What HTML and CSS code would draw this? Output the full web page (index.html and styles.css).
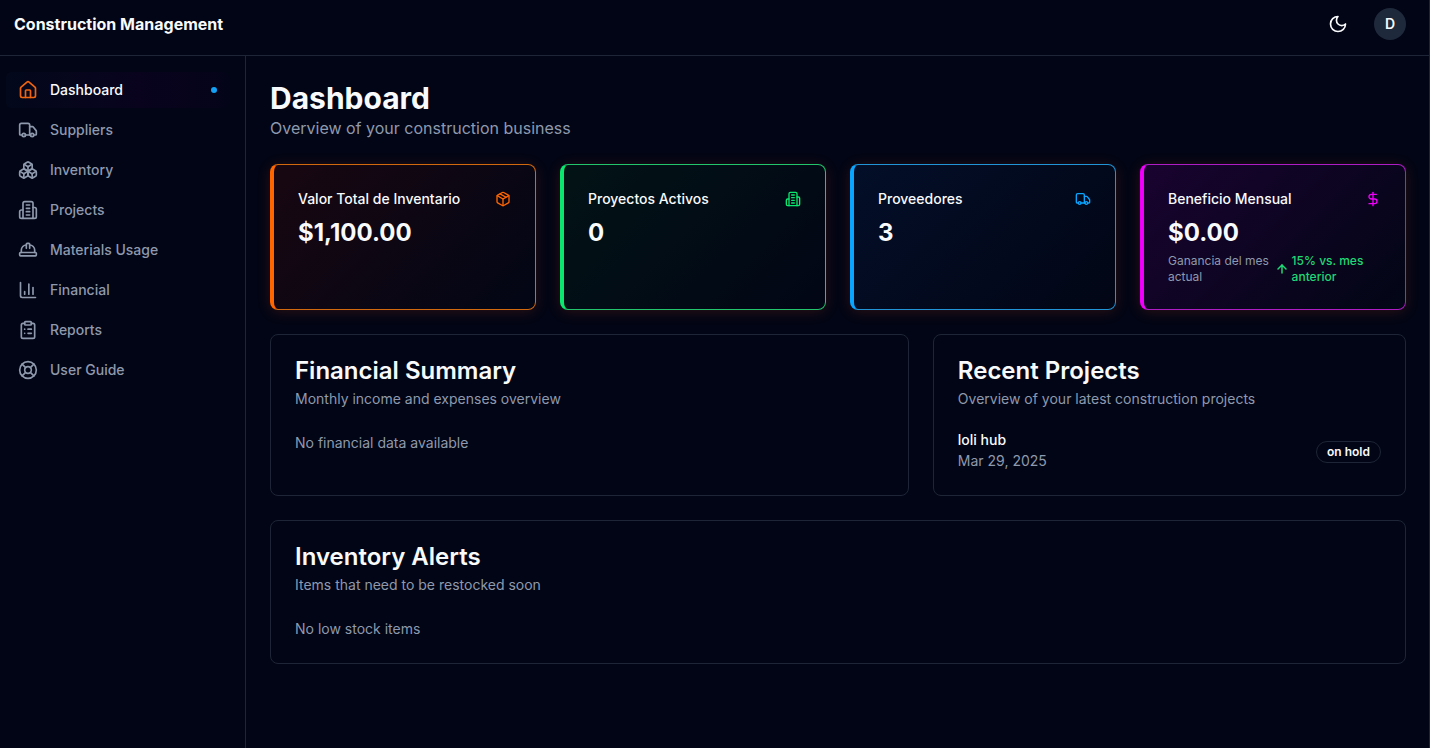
FILE: index.html
```html
<!DOCTYPE html>
<html lang="en">
<head>
<meta charset="utf-8">
<meta name="viewport" content="width=device-width, initial-scale=1">
<title>Construction Management</title>
<link rel="stylesheet" href="styles.css">
</head>
<body>
<svg class="sprite" aria-hidden="true">
  <symbol id="truck" viewBox="0 0 24 24"><path d="M14 18V6a2 2 0 0 0-2-2H4a2 2 0 0 0-2 2v11a1 1 0 0 0 1 1h2"/><path d="M15 18H9"/><path d="M19 18h2a1 1 0 0 0 1-1v-3.65a1 1 0 0 0-.22-.624l-3.48-4.35A1 1 0 0 0 17.52 8H14"/><circle cx="17" cy="18" r="2"/><circle cx="7" cy="18" r="2"/></symbol>
  <symbol id="building" viewBox="0 0 24 24"><path d="M6 22V4a2 2 0 0 1 2-2h8a2 2 0 0 1 2 2v18Z"/><path d="M6 12H4a2 2 0 0 0-2 2v6a2 2 0 0 0 2 2h2"/><path d="M18 9h2a2 2 0 0 1 2 2v9a2 2 0 0 1-2 2h-2"/><path d="M10 6h4"/><path d="M10 10h4"/><path d="M10 14h4"/><path d="M10 18h4"/></symbol>
</svg>
<div class="app">
  <header class="topbar">
    <a class="brand" href="#">Construction Management</a>
    <div class="actions">
      <button class="theme" type="button" aria-label="Toggle theme"><svg class="icon" viewBox="0 0 24 24"><path d="M12 3a6 6 0 0 0 9 9 9 9 0 1 1-9-9Z"/></svg></button>
      <button class="avatar" type="button">D</button>
    </div>
  </header>
  <div class="body">
    <nav class="sidebar">
      <a class="item active" href="#"><svg class="icon" viewBox="0 0 24 24"><path d="M15 21v-8a1 1 0 0 0-1-1h-4a1 1 0 0 0-1 1v8"/><path d="M3 10a2 2 0 0 1 .709-1.528l7-5.999a2 2 0 0 1 2.582 0l7 5.999A2 2 0 0 1 21 10v9a2 2 0 0 1-2 2H5a2 2 0 0 1-2-2z"/></svg><span>Dashboard</span><i class="dot"></i></a>
      <a class="item" href="#"><svg class="icon"><use href="#truck"/></svg><span>Suppliers</span></a>
      <a class="item" href="#"><svg class="icon" viewBox="0 0 24 24"><path d="M2.97 12.92A2 2 0 0 0 2 14.63v3.24a2 2 0 0 0 .97 1.71l3 1.8a2 2 0 0 0 2.06 0L12 19v-5.5l-5-3-4.03 2.42Z"/><path d="m7 16.5-4.74-2.85"/><path d="m7 16.5 5-3"/><path d="M7 16.5v5.17"/><path d="M12 13.5V19l3.97 2.38a2 2 0 0 0 2.06 0l3-1.8a2 2 0 0 0 .97-1.71v-3.24a2 2 0 0 0-.97-1.71L17 10.5l-5 3Z"/><path d="m17 16.5-5-3"/><path d="m17 16.5 4.74-2.85"/><path d="M17 16.5v5.17"/><path d="M7.97 4.42A2 2 0 0 0 7 6.13v4.37l5 3 5-3V6.13a2 2 0 0 0-.97-1.71l-3-1.8a2 2 0 0 0-2.06 0l-3 1.8Z"/><path d="M12 8 7.26 5.15"/><path d="m12 8 4.74-2.85"/><path d="M12 13.5V8"/></svg><span>Inventory</span></a>
      <a class="item" href="#"><svg class="icon"><use href="#building"/></svg><span>Projects</span></a>
      <a class="item" href="#"><svg class="icon" viewBox="0 0 24 24"><path d="M2 18a1 1 0 0 0 1 1h18a1 1 0 0 0 1-1v-2a1 1 0 0 0-1-1H3a1 1 0 0 0-1 1v2z"/><path d="M10 10V5a1 1 0 0 1 1-1h2a1 1 0 0 1 1 1v5"/><path d="M4 15v-3a6 6 0 0 1 6-6"/><path d="M14 6a6 6 0 0 1 6 6v3"/></svg><span>Materials Usage</span></a>
      <a class="item" href="#"><svg class="icon" viewBox="0 0 24 24"><path d="M3 3v16a2 2 0 0 0 2 2h16"/><path d="M18 17V9"/><path d="M13 17V5"/><path d="M8 17v-3"/></svg><span>Financial</span></a>
      <a class="item" href="#"><svg class="icon" viewBox="0 0 24 24"><rect width="8" height="4" x="8" y="2" rx="1"/><path d="M16 4h2a2 2 0 0 1 2 2v14a2 2 0 0 1-2 2H6a2 2 0 0 1-2-2V6a2 2 0 0 1 2-2h2"/><path d="M12 11h4"/><path d="M12 16h4"/><path d="M8 11h.01"/><path d="M8 16h.01"/></svg><span>Reports</span></a>
      <a class="item" href="#"><svg class="icon" viewBox="0 0 24 24"><circle cx="12" cy="12" r="10"/><path d="m4.93 4.93 4.24 4.24"/><path d="m14.83 9.17 4.24-4.24"/><path d="m14.83 14.83 4.24 4.24"/><path d="m9.17 14.83-4.24 4.24"/><circle cx="12" cy="12" r="4"/></svg><span>User Guide</span></a>
    </nav>
    <main class="content">
      <div>
        <h1>Dashboard</h1>
        <p class="lead">Overview of your construction business</p>
      </div>
      <section class="stats">
        <article class="stat orange">
          <div class="stat-head"><h2>Valor Total de Inventario</h2><svg class="icon small" viewBox="0 0 24 24"><path d="m7.5 4.27 9 5.15"/><path d="M21 8a2 2 0 0 0-1-1.73l-7-4a2 2 0 0 0-2 0l-7 4A2 2 0 0 0 3 8v8a2 2 0 0 0 1 1.73l7 4a2 2 0 0 0 2 0l7-4A2 2 0 0 0 21 16Z"/><path d="m3.3 7 8.7 5 8.7-5"/><path d="M12 22V12"/></svg></div>
          <div class="value">$1,100.00</div>
        </article>
        <article class="stat green">
          <div class="stat-head"><h2>Proyectos Activos</h2><svg class="icon small"><use href="#building"/></svg></div>
          <div class="value">0</div>
        </article>
        <article class="stat blue">
          <div class="stat-head"><h2>Proveedores</h2><svg class="icon small"><use href="#truck"/></svg></div>
          <div class="value">3</div>
        </article>
        <article class="stat pink">
          <div class="stat-head"><h2>Beneficio Mensual</h2><svg class="icon small" viewBox="0 0 24 24"><path d="M12 2v20"/><path d="M17 5H9.5a3.5 3.5 0 0 0 0 7h5a3.5 3.5 0 0 1 0 7H6"/></svg></div>
          <div class="value">$0.00</div>
          <div class="note">
            <p>Ganancia del mes actual</p>
            <div class="trend"><svg class="icon tiny" viewBox="0 0 24 24"><path d="m4 12 8-8 8 8"/><path d="M12 20V4"/></svg><span>15% vs. mes anterior</span></div>
          </div>
        </article>
      </section>
      <section class="panels">
        <article class="panel wide">
          <h2>Financial Summary</h2>
          <p class="desc">Monthly income and expenses overview</p>
          <p class="empty">No financial data available</p>
        </article>
        <article class="panel narrow">
          <h2>Recent Projects</h2>
          <p class="desc">Overview of your latest construction projects</p>
          <div class="project">
            <div><p class="name">loli hub</p><p class="date">Mar 29, 2025</p></div>
            <span class="badge">on hold</span>
          </div>
        </article>
      </section>
      <article class="panel">
        <h2>Inventory Alerts</h2>
        <p class="desc">Items that need to be restocked soon</p>
        <p class="empty">No low stock items</p>
      </article>
    </main>
  </div>
</div>
</body>
</html>
```
FILE: styles.css
```css
:root {
  --bg: #020515;
  --line: #1e2536;
  --text: #f8fafc;
  --muted: #8e99ad;
}
* { box-sizing: border-box; }
body, h1, h2, p { margin: 0; }
body {
  background: var(--bg);
  color: var(--text);
  font-family: Inter, "Liberation Sans", sans-serif;
  font-size: 14px;
  line-height: 20px;
}
a { color: inherit; text-decoration: none; }
button { border: 0; padding: 0; font: inherit; color: inherit; background: none; cursor: pointer; }
.sprite { display: none; }
.icon {
  width: 20px;
  height: 20px;
  flex: none;
  fill: none;
  stroke: currentColor;
  stroke-width: 2;
  stroke-linecap: round;
  stroke-linejoin: round;
}
.small { width: 16px; height: 16px; color: var(--accent); }
.tiny { width: 12px; height: 12px; stroke-width: 3; }

.app {
  display: flex;
  flex-direction: column;
  min-height: 100vh;
  box-shadow: inset -1px 0 var(--line);
}
.topbar {
  display: flex;
  align-items: center;
  justify-content: space-between;
  padding: 4px 24px 11px 14px;
  border-bottom: 1px solid var(--line);
}
.brand { font-size: 16px; line-height: 24px; font-weight: 700; }
.actions { display: flex; align-items: center; gap: 16px; }
.theme { display: grid; place-items: center; width: 40px; height: 40px; }
.avatar {
  width: 32px;
  height: 32px;
  border-radius: 50%;
  background: #1e293b;
  font-weight: 600;
}

.body { display: flex; flex: 1; }
.sidebar {
  display: flex;
  flex-direction: column;
  gap: 4px;
  flex: none;
  width: 246px;
  padding: 16px 16px 16px 6px;
  border-right: 1px solid var(--line);
}
.item {
  display: flex;
  align-items: center;
  gap: 12px;
  padding: 8px 12px;
  border-radius: 6px;
  color: var(--muted);
  font-weight: 500;
}
.item.active {
  color: var(--text);
  background: linear-gradient(90deg, #03081b, #09031e 60%, #040419);
}
.active .icon { color: #f0640f; }
.dot { width: 6px; height: 6px; margin-left: auto; border-radius: 50%; background: #14a0f5; }

.content {
  flex: 1;
  min-width: 0;
  display: flex;
  flex-direction: column;
  gap: 24px;
  padding: 24px;
}
h1 { font-size: 30px; line-height: 36px; font-weight: 700; }
.lead { font-size: 16px; line-height: 24px; color: var(--muted); }

.stats { display: grid; grid-template-columns: repeat(4, 1fr); gap: 24px; }
.stat {
  padding: 24px;
  border: 1px solid var(--edge);
  border-left: 4px solid var(--accent);
  border-radius: 8px;
  background: linear-gradient(135deg, var(--tint), #020615);
  box-shadow: 0 2px 14px rgba(255, 90, 20, 0.16);
}
.orange { --accent: #ff6600; --edge: #d2690f; --tint: #180711; }
.green { --accent: #0ae66e; --edge: #22c46c; --tint: #021315; }
.blue { --accent: #0aa5ff; --edge: #2094d6; --tint: #030e28; }
.pink { --accent: #f000fa; --edge: #ae1cc6; --tint: #19032f; }
.stat-head { display: flex; align-items: center; justify-content: space-between; margin-bottom: 8px; }
.stat-head h2 { font-size: 14px; line-height: 20px; font-weight: 500; }
.value { font-size: 24px; line-height: 32px; font-weight: 700; }
.note { display: flex; align-items: center; margin-top: 4px; font-size: 12px; line-height: 16px; color: var(--muted); }
.trend { display: flex; align-items: center; gap: 4px; color: #1fd875; font-weight: 500; }

.panels { display: grid; grid-template-columns: repeat(7, 1fr); gap: 24px; }
.wide { grid-column: span 4; }
.narrow { grid-column: span 3; }
.panel { padding: 24px; border: 1px solid var(--line); border-radius: 8px; }
.panel h2 { font-size: 24px; line-height: 24px; font-weight: 600; margin-bottom: 6px; }
.desc { margin-bottom: 24px; color: var(--muted); }
.empty, .date { color: var(--muted); }
.project { display: flex; align-items: center; justify-content: space-between; }
.name { margin-bottom: 4px; line-height: 14px; font-weight: 500; }
.badge {
  padding: 2px 10px;
  border: 1px solid var(--line);
  border-radius: 11px;
  font-size: 12px;
  line-height: 16px;
  font-weight: 600;
}
```
